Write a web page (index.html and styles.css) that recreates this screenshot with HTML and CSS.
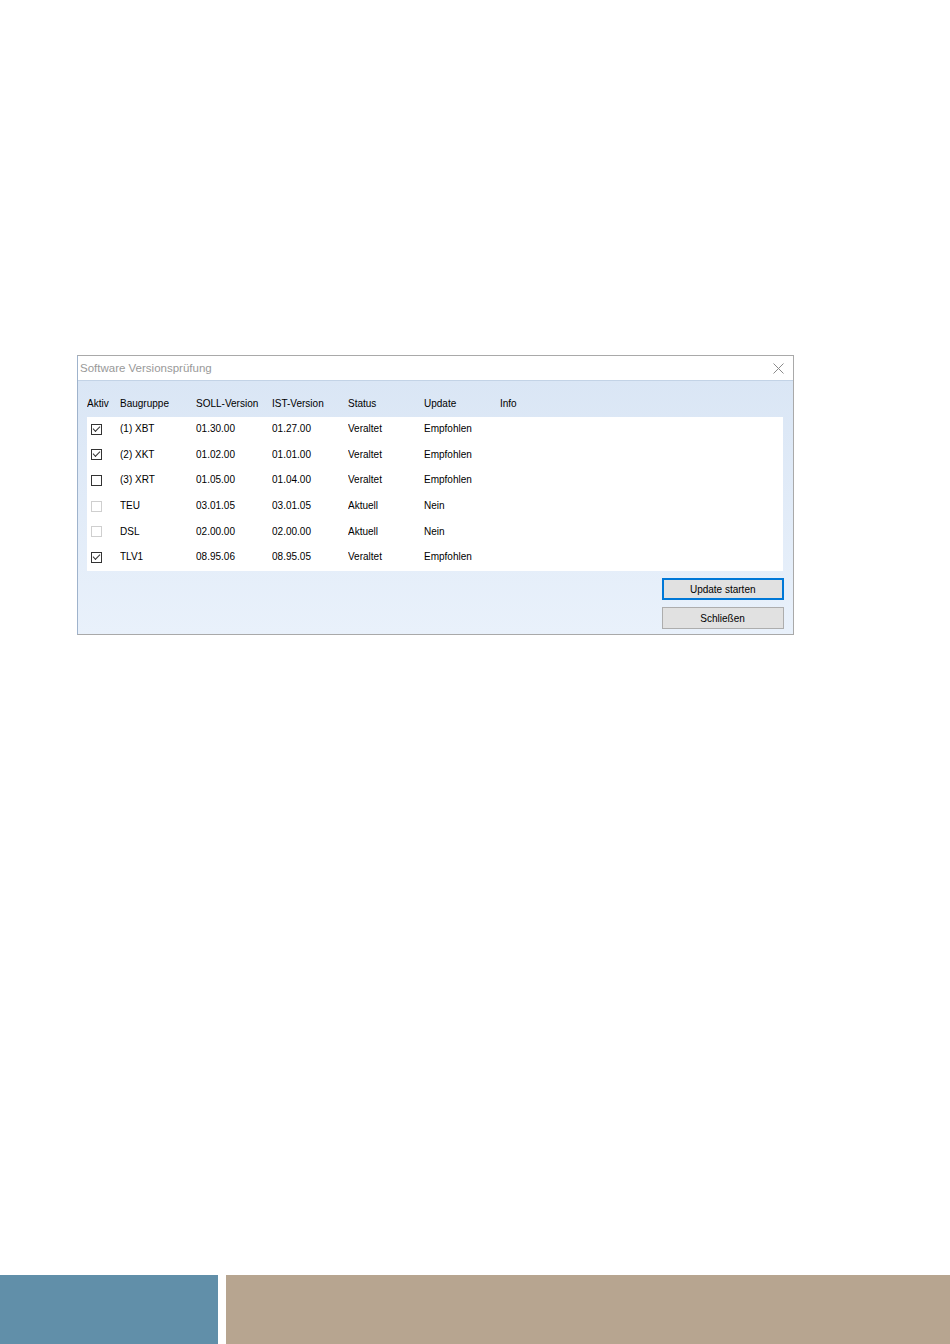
FILE: index.html
```html
<!DOCTYPE html>
<html lang="de">
<head>
  <meta charset="UTF-8" />
  <meta name="viewport" content="width=device-width, initial-scale=1.0" />
  <title>Software Versionsprüfung</title>
  <link rel="stylesheet" href="styles.css">
</head>
<body>
  <div class="seite">
    <div class="dialog">
      <div class="titelleiste">
        <span class="titel">Software Versionsprüfung</span>
        <svg class="schliessen-x" width="11" height="11" viewBox="0 0 11 11">
          <path d="M0.5 0.5 L10.5 10.5 M10.5 0.5 L0.5 10.5" stroke="#8a8a8a" stroke-width="1" fill="none" />
        </svg>
      </div>

      <div class="inhalt">
        <div class="zeile kopf">
          <span>Aktiv</span>
          <span>Baugruppe</span>
          <span>SOLL-Version</span>
          <span>IST-Version</span>
          <span>Status</span>
          <span>Update</span>
          <span>Info</span>
        </div>

        <div class="liste">
          <div class="zeile">
            <span class="box an"></span><span>(1) XBT</span><span>01.30.00</span><span>01.27.00</span><span>Veraltet</span><span>Empfohlen</span><span></span>
          </div>
          <div class="zeile">
            <span class="box an"></span><span>(2) XKT</span><span>01.02.00</span><span>01.01.00</span><span>Veraltet</span><span>Empfohlen</span><span></span>
          </div>
          <div class="zeile">
            <span class="box"></span><span>(3) XRT</span><span>01.05.00</span><span>01.04.00</span><span>Veraltet</span><span>Empfohlen</span><span></span>
          </div>
          <div class="zeile">
            <span class="box aus"></span><span>TEU</span><span>03.01.05</span><span>03.01.05</span><span>Aktuell</span><span>Nein</span><span></span>
          </div>
          <div class="zeile">
            <span class="box aus"></span><span>DSL</span><span>02.00.00</span><span>02.00.00</span><span>Aktuell</span><span>Nein</span><span></span>
          </div>
          <div class="zeile">
            <span class="box an"></span><span>TLV1</span><span>08.95.06</span><span>08.95.05</span><span>Veraltet</span><span>Empfohlen</span><span></span>
          </div>
        </div>

        <div class="knoepfe">
          <button class="knopf standard"><span class="knopf-text">Update starten</span></button>
          <button class="knopf"><span class="knopf-text">Schließen</span></button>
        </div>
      </div>
    </div>

    <div class="fuss">
      <div class="fuss-blau"></div>
      <div class="fuss-braun"></div>
    </div>
  </div>
</body>
</html>
```

FILE: styles.css
```css
body {
  margin: 0;
  padding: 0;
  background: #fff;
  font-family: "Liberation Sans", Arial, sans-serif;
  color: #000;
}

.seite {
  display: flex;
  flex-direction: column;
  min-height: 1344px;
}

.dialog {
  margin: 355px 0 0 77px;
  width: 717px;
  height: 280px;
  box-sizing: border-box;
  border: 1px solid #a9a9a9;
  border-left-color: #9fb3cc;
  display: flex;
  flex-direction: column;
}

.titelleiste {
  height: 25px;
  box-sizing: border-box;
  background: #fff;
  border-bottom: 1px solid #c3d3e6;
  display: flex;
  align-items: center;
  justify-content: space-between;
  padding: 0 9px 0 2px;
}

.titel {
  font-size: 11.5px;
  color: #999;
}

.inhalt {
  flex: 1;
  background: linear-gradient(to bottom, #dae6f5, #e9f1fb);
  display: flex;
  flex-direction: column;
  padding: 0 9px 5px 9px;
}

.zeile {
  display: grid;
  grid-template-columns: 33px 76px 76px 76px 76px 76px 1fr;
  align-items: center;
  font-size: 11.5px;
  height: 25.6px;
}

/* schmale Schrift wie im Original */
.zeile > span:not(.box),
.knopf-text {
  display: inline-block;
  transform: scaleX(0.87);
  transform-origin: left center;
  white-space: nowrap;
}

.kopf {
  height: 36px;
  box-sizing: border-box;
  padding-top: 7px;
}

.liste {
  background: #fff;
  display: flex;
  flex-direction: column;
  margin-right: 1px;
}

.liste .zeile {
  padding-bottom: 3px;
  box-sizing: border-box;
}

.box {
  width: 11px;
  height: 11px;
  box-sizing: border-box;
  border: 1px solid #333;
  margin-left: 4px;
  margin-top: 2px;
  position: relative;
}

.box.aus {
  border-color: #cfcfcf;
}

.box.an::after {
  content: "";
  position: absolute;
  top: 1px;
  left: 1px;
  width: 6px;
  height: 3px;
  border-left: 1px solid #333;
  border-bottom: 1px solid #333;
  transform: rotate(-45deg);
}

.knoepfe {
  display: flex;
  flex-direction: column;
  align-items: flex-end;
  gap: 7px;
  margin-top: 7px;
}

.knopf {
  width: 122px;
  height: 22px;
  box-sizing: border-box;
  background: #e1e1e1;
  border: 1px solid #adadad;
  font-family: inherit;
  font-size: 11.5px;
  color: #000;
  padding: 0;
}

.knopf-text {
  transform-origin: center center;
}

.knopf.standard {
  border: 2px solid #0078d7;
}

.fuss {
  margin-top: auto;
  display: flex;
  gap: 8px;
  height: 69px;
}

.fuss-blau {
  width: 218px;
  background: #618fa9;
}

.fuss-braun {
  flex: 1;
  background: #b7a590;
}
```
